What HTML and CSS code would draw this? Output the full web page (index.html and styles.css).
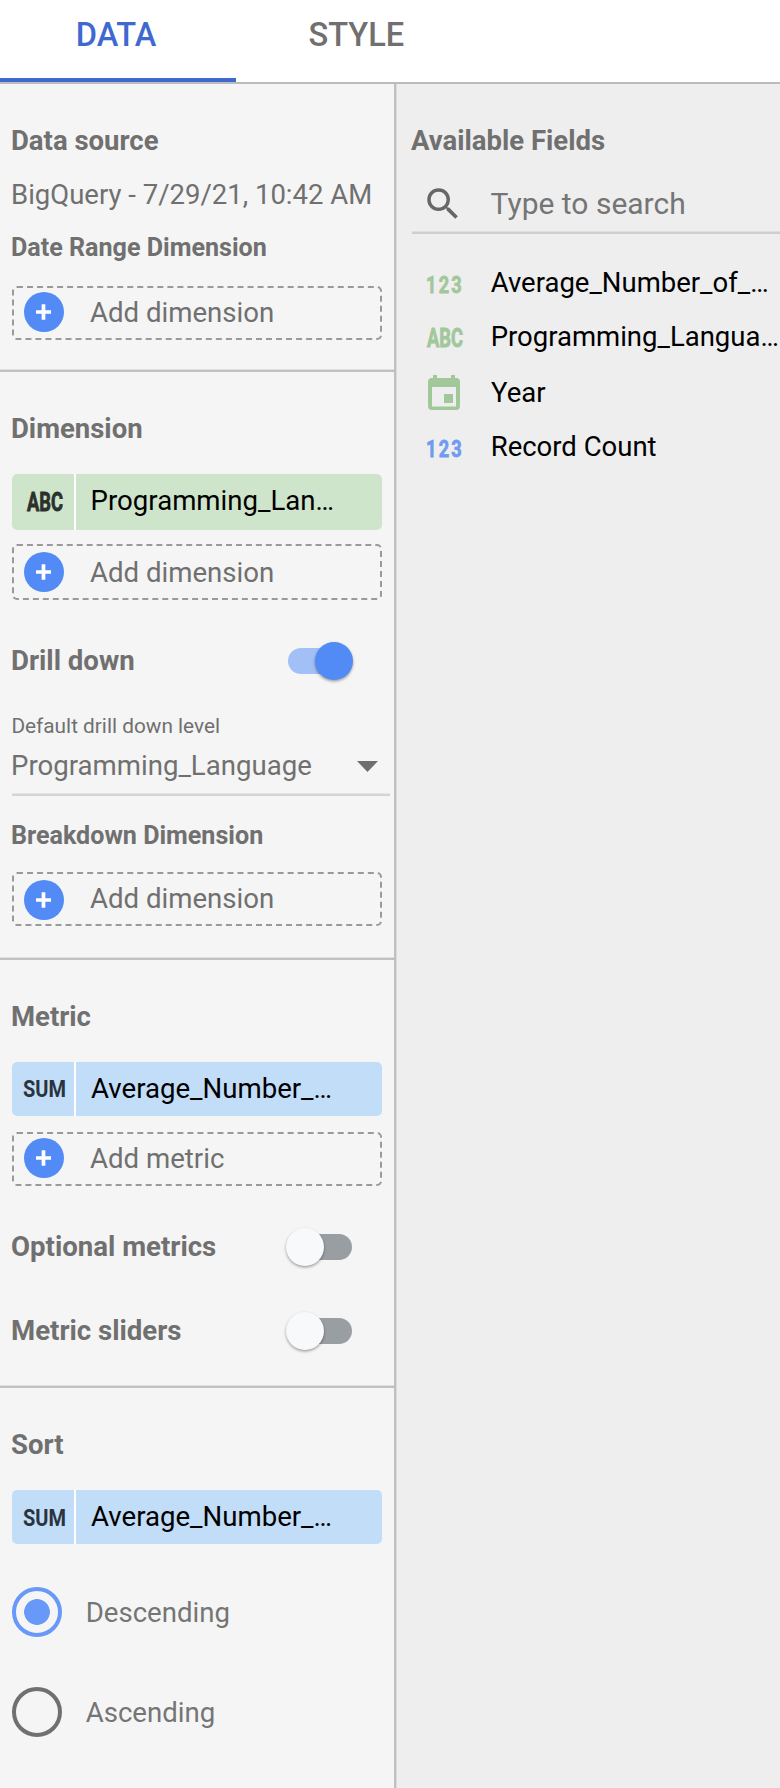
FILE: index.html
```html
<!DOCTYPE html>
<html lang="en">
<head>
<meta charset="utf-8">
<title>Chart data panel</title>
<link rel="stylesheet" href="styles.css">
</head>
<body>
<nav class="tabs">
  <div class="tab tab-active">DATA</div>
  <div class="tab tab-style">STYLE</div>
</nav>
<main class="panels">
  <div class="setup">
    <section class="section section-source">
      <h2 class="heading">Data source</h2>
      <div class="source">BigQuery - 7/29/21, 10:42 AM</div>
      <h3 class="subheading">Date Range Dimension</h3>
      <div class="add"><svg class="plus up" viewBox="0 0 40 40"><circle cx="20" cy="20" r="20"/><path d="M12 20h15M19.500 12.200v15.600"/></svg><span>Add dimension</span></div>
    </section>
    <section class="section section-dimension">
      <h2 class="heading">Dimension</h2>
      <div class="chip chip-green">
        <div class="chip-type"><svg class="type-icon" viewBox="0 0 36 20"><text x="0" y="19" textLength="36" lengthAdjust="spacingAndGlyphs">ABC</text></svg></div>
        <div class="chip-label">Programming_Lan…</div>
      </div>
      <div class="add add-tall"><svg class="plus" viewBox="0 0 40 40"><circle cx="20" cy="20" r="20"/><path d="M12 20h15M19.500 12.200v15.600"/></svg><span>Add dimension</span></div>
      <div class="toggle-row"><span>Drill down</span><span class="switch switch-on"><span class="thumb"></span></span></div>
      <div class="select-label">Default drill down level</div>
      <div class="select"><span>Programming_Language</span><svg class="caret" viewBox="0 0 21 11"><path d="M0 0h21L10.500 11z"/></svg></div>
      <h3 class="subheading subheading-breakdown">Breakdown Dimension</h3>
      <div class="add"><svg class="plus down" viewBox="0 0 40 40"><circle cx="20" cy="20" r="20"/><path d="M12 20h15M19.500 12.200v15.600"/></svg><span>Add dimension</span></div>
    </section>
    <section class="section section-metric">
      <h2 class="heading">Metric</h2>
      <div class="chip chip-blue">
        <div class="chip-type"><svg class="sum-icon" viewBox="0 0 42 20"><text x="0" y="18" textLength="43" lengthAdjust="spacingAndGlyphs">SUM</text></svg></div>
        <div class="chip-label label-average">Average_Number_…</div>
      </div>
      <div class="add add-metric"><svg class="plus up" viewBox="0 0 40 40"><circle cx="20" cy="20" r="20"/><path d="M12 20h15M19.500 12.200v15.600"/></svg><span>Add metric</span></div>
      <div class="toggle-row"><span>Optional metrics</span><span class="switch"><span class="thumb"></span></span></div>
      <div class="toggle-row toggle-sliders"><span>Metric sliders</span><span class="switch"><span class="thumb"></span></span></div>
    </section>
    <section class="section section-sort">
      <h2 class="heading">Sort</h2>
      <div class="chip chip-blue chip-sort">
        <div class="chip-type"><svg class="sum-icon sum-low" viewBox="0 0 42 20"><text x="0" y="18" textLength="43" lengthAdjust="spacingAndGlyphs">SUM</text></svg></div>
        <div class="chip-label label-average">Average_Number_…</div>
      </div>
      <div class="radio-row"><span class="radio radio-on"></span><span class="radio-label">Descending</span></div>
      <div class="radio-row radio-second"><span class="radio"></span><span class="radio-label">Ascending</span></div>
    </section>
  </div>
  <aside class="fields">
    <h2 class="heading">Available Fields</h2>
    <div class="search">
      <svg class="search-icon" viewBox="0 0 24 24"><path d="M15.500 14h-.790l-.280-.270A6.471 6.471 0 0 0 16 9.500 6.500 6.500 0 1 0 9.500 16c1.610 0 3.090-.590 4.230-1.570l.270.280v.790l5 4.990L20.490 19l-4.990-5zm-6 0C7.010 14 5 11.990 5 9.500S7.010 5 9.500 5 14 7.010 14 9.500 11.990 14 9.500 14z"/></svg>
      <span>Type to search</span>
    </div>
    <ul class="field-list">
      <li class="field"><svg class="type-icon digits green" viewBox="0 0 36 20"><text x="-1" y="19" textLength="38" lengthAdjust="spacingAndGlyphs">123</text></svg><span>Average_Number_of_…</span></li>
      <li class="field"><svg class="type-icon green" viewBox="0 0 36 20"><text x="0" y="19" textLength="36" lengthAdjust="spacingAndGlyphs">ABC</text></svg><span>Programming_Langua…</span></li>
      <li class="field field-year"><svg class="calendar" viewBox="0 0 32 35"><path fill-rule="evenodd" d="M5 0h4v3h14V0h4v3h1a4 4 0 0 1 4 4v24a4 4 0 0 1-4 4H4a4 4 0 0 1-4-4V7a4 4 0 0 1 4-4h1zM4 12v19.500h24V12zM16 19h9v9h-9z"/></svg><span>Year</span></li>
      <li class="field"><svg class="type-icon digits blue" viewBox="0 0 36 20"><text x="-1" y="19" textLength="38" lengthAdjust="spacingAndGlyphs">123</text></svg><span>Record Count</span></li>
    </ul>
  </aside>
</main>
</body>
</html>
```

FILE: styles.css
```css
* { box-sizing: border-box; }

body {
  margin: 0;
  width: 780px;
  height: 1788px;
  display: flex;
  flex-direction: column;
  overflow: hidden;
  background: #f5f5f5;
  color: #707070;
  font-family: Roboto, sans-serif;
  font-size: 27.6px;
  line-height: 54px;
  white-space: nowrap;
}

svg { display: block; flex: none; overflow: visible; }

.tabs {
  display: flex;
  flex: none;
  height: 84px;
  background: #fff;
  border-bottom: 2px solid #bcbcbc;
  font-size: 32.600px;
  font-weight: 500;
  line-height: 70px;
}
.tab { width: 236px; padding-left: 75.800px; }
.tab-active { color: #3f69d0; border-bottom: 4px solid #3f69d0; }
.tab-style { padding-left: 72.500px; }

.panels { display: flex; flex: 1; }
.setup { width: 394px; flex: none; }
.fields {
  flex: 1;
  min-width: 0;
  padding: 30px 0 0 15px;
  background: #eee;
  border-left: 2px solid #bfbfbf;
  box-shadow: inset 1px 0 #dcdcdc;
}

.heading, .subheading { margin: 0; font-size: 27.500px; font-weight: 700; }
.subheading { font-size: 25.100px; }

.section {
  padding: 30px 10px 0 11px;
  border-bottom: 2px solid #c0c0c0;
  box-shadow: inset 0 -1px #e0e0e0;
}
.section-source { padding-bottom: 30px; }
.section-dimension { padding-bottom: 32px; }
.section-metric { padding-bottom: 28px; }
.section-sort { padding-top: 30px; border: 0; box-shadow: none; }

.source { font-size: 27.500px; line-height: 53px; }
.section-source .subheading { line-height: 54px; }

.add {
  display: flex;
  align-items: center;
  width: 370px;
  height: 54px;
  margin: 11px 0 0 1px;
  padding-left: 10px;
  border: 2px dashed #9a9a9a;
  border-radius: 5px;
  line-height: 50px;
}
.add span { margin-left: 26px; }
.add-tall { height: 56px; margin-top: 14px; line-height: 52px; }
.add-tall span { padding-top: 1px; }
.add-metric { margin-top: 16px; }
.subheading-breakdown { margin-top: 13px; }
.subheading-breakdown + .add { margin-top: 9px; }

.plus { width: 40px; height: 40px; fill: #528bf6; }
.plus path { fill: none; stroke: #fff; stroke-width: 3.700; }
.up { margin-top: -2px; }
.down { margin-top: 2px; }

.chip {
  display: flex;
  gap: 2px;
  width: 370px;
  height: 54px;
  margin: 18px 0 0 1px;
  border-radius: 5px;
  overflow: hidden;
  background: #fff;
  color: #000;
}
.chip-green { height: 56px; }
.chip-type { width: 62px; display: flex; align-items: center; padding-left: 15px; }
.chip-label { flex: 1; padding-left: 14.600px; line-height: 53px; }
.label-average { padding-left: 15px; }
.chip-green > div { background: #cfe5cb; }
.chip-blue > div { background: #c2ddf8; }
.chip-blue .chip-type { padding-left: 11px; }

.type-icon { width: 36px; height: 20px; font-size: 25px; font-weight: 700; fill: #2b312b; stroke: #2b312b; stroke-width: .8px; }
.digits { font-size: 24.500px; letter-spacing: 3px; }
.sum-icon { width: 42px; height: 20px; font-size: 23.500px; font-weight: 700; fill: #293440; }
.sum-low { margin-top: 2px; }
.type-icon.green { fill: #a1c79b; stroke: #a1c79b; }
.type-icon.blue { fill: #709bf0; stroke: #709bf0; }

.toggle-row {
  display: flex;
  align-items: center;
  justify-content: space-between;
  height: 54px;
  margin-top: 34px;
  padding-right: 32px;
  font-weight: 700;
}
.toggle-sliders { margin-top: 30px; }
.switch {
  display: flex;
  align-items: center;
  width: 63px;
  height: 26px;
  border-radius: 13px;
  background: #999ea3;
}
.switch .thumb {
  width: 38px;
  height: 38px;
  flex: none;
  margin-left: -3.500px;
  border-radius: 50%;
  background: #f8f9fb;
  box-shadow: 0 1.500px 3px rgba(0, 0, 0, .36);
}
.switch-on { justify-content: flex-end; width: 64px; background: #a2bff6; }
.switch-on .thumb { margin-right: -1px; background: #528bf6; }

.select-label { margin-top: 23px; font-size: 20.800px; line-height: 30px; padding-left: .400px; }
.select {
  display: flex;
  align-items: flex-start;
  justify-content: space-between;
  width: 378px;
  height: 55px;
  margin-left: 1px;
  padding-right: 12.500px;
  border-bottom: 2px solid #d4d4d4;
  box-shadow: inset 0 -1px #e6e6e6;
  line-height: 50px;
}
.select span { margin-left: -1px; }
.caret { width: 21px; height: 11px; margin-top: 20px; fill: #6f6f6f; }

.radio-row {
  display: flex;
  align-items: center;
  gap: 23.700px;
  height: 50px;
  margin: 42px 0 0 1px;
  color: #757575;
}
.section-sort .chip { margin-top: 18px; }
.section-sort .chip + .radio-row { margin-top: 43px; }
.radio-row.radio-second { margin-top: 50px; }
.radio-label { padding-top: 2px; }
.radio { width: 50px; height: 50px; border: 4px solid #707070; border-radius: 50%; }
.radio-on { border-color: #6999f8; background: radial-gradient(circle, #6999f8 12.500px, transparent 13.200px); }

.search {
  display: flex;
  align-items: center;
  gap: 27px;
  height: 66px;
  margin-left: 1px;
  padding: 8px 0 0 9.600px;
  border-bottom: 2px solid #cfcfcf;
  box-shadow: inset 0 -1px #dedede;
  color: #757575;
  font-size: 30px;
}
.search-icon { width: 42px; height: 42px; fill: #666; }

.field-list { margin: 22px 0 0; padding: 0; list-style: none; color: #000; font-size: 27.500px; }
.field {
  display: flex;
  align-items: center;
  gap: 28px;
  height: 54px;
  padding-left: 15.700px;
}
.field .type-icon { margin-top: 1px; }
.field-year { height: 56px; gap: 31px; padding-left: 17px; }
.field-year span { padding-top: 2px; }
.calendar { width: 32px; height: 35px; fill: #a1c79b; }
```
